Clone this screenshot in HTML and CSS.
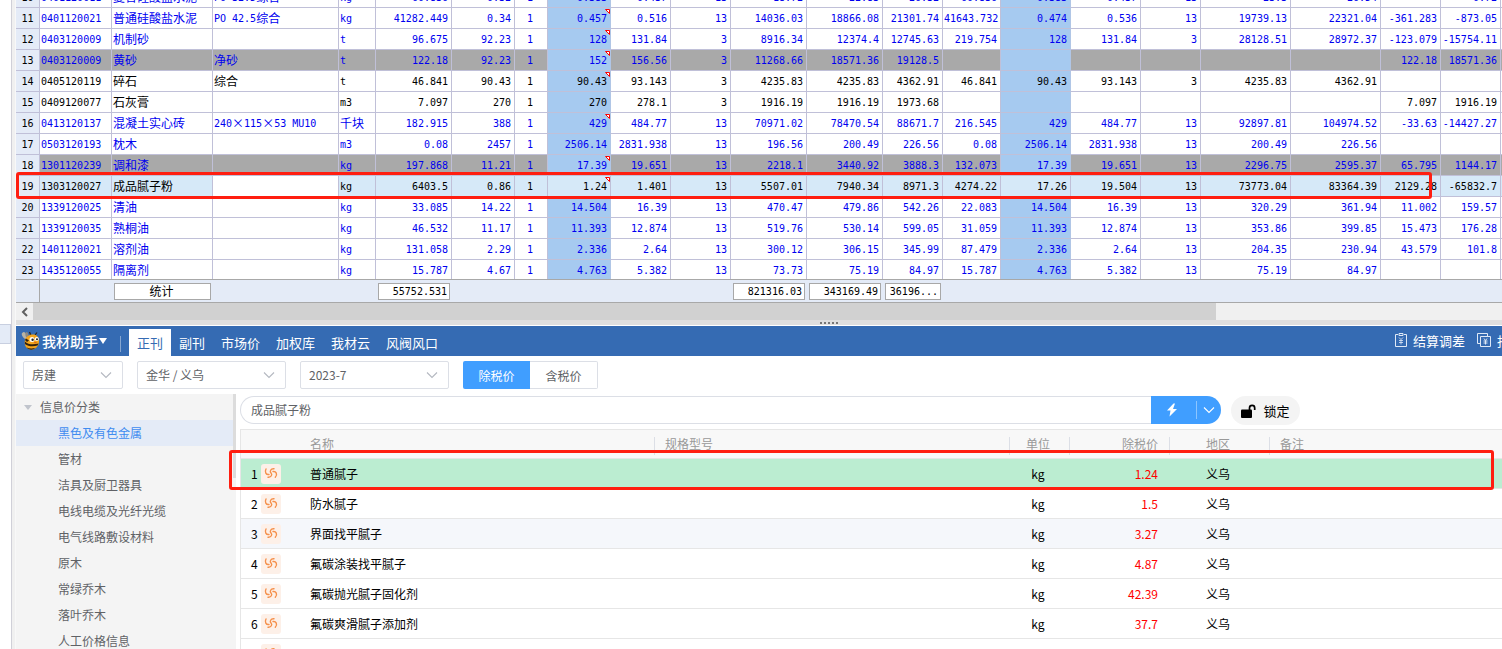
FILE: index.html
```
<!DOCTYPE html>
<html lang="zh-CN">
<head>
    <meta charset="UTF-8">
    <meta name="viewport" content="width=device-width, initial-scale=1.0">
    <title>我材助手</title>
    <link rel="stylesheet" href="styles.css">
</head>
<body>
    <!-- shared icons -->
    <svg class="icon-defs" aria-hidden="true">
        <symbol id="icon-down" viewBox="0 0 12 12">
            <path d="M1 3.5l5 5 5-5" fill="none" stroke="currentColor" stroke-width="1.1"/>
        </symbol>
        <symbol id="icon-link" viewBox="0 0 20 20">
            <path d="M5 5C3.500 8 5 11 8 10.500M13 4.800C9.500 4.500 8.500 7.500 10 9C11.500 10.500 10.500 13.500 7 13.200M12 7.500C15 7 17 10.500 14.300 13.300" fill="none" stroke="#f5914d" stroke-width="1.400" stroke-linecap="round"/>
        </symbol>
    </svg>

    <div class="app">
        <div class="left-strip">
            <div class="strip-top"></div>
            <div class="strip-tab"></div>
        </div>

        <div class="workspace">
            <!-- Settlement grid -->
            <section class="grid-pane">
                <div class="grid-view">
                    <table class="grid" id="grid">
                        <colgroup id="gridCols"></colgroup>
                        <tbody id="gridBody"></tbody>
                    </table>
                    <div class="mark mark-grid"></div>
                </div>
                <div class="grid-total">
                    <table class="grid total">
                        <colgroup id="totalCols"></colgroup>
                        <tbody><tr id="totalRow"></tr></tbody>
                    </table>
                </div>
                <div class="hscroll">
                    <button class="hscroll-btn" aria-label="向左滚动">
                        <svg width="8" height="10" viewBox="0 0 8 10"><path d="M6 1L2 5l4 4" fill="none" stroke="#606060" stroke-width="2"/></svg>
                    </button>
                    <div class="hscroll-thumb"></div>
                </div>
                <div class="splitter"><i></i><i></i><i></i><i></i><i></i></div>
            </section>

            <!-- Price helper -->
            <section class="helper">
                <header class="toolbar">
                    <button class="brand">
                        <svg width="20" height="20" viewBox="0 0 20 20">
                            <ellipse cx="3.500" cy="4.500" rx="2.200" ry="3.600" transform="rotate(-30 3.500 4.500)" fill="#b9b3a4"/>
                            <ellipse cx="6" cy="4" rx="1.600" ry="3" transform="rotate(-10 6 4)" fill="#8f8a80"/>
                            <path d="M10 4.500L8.500 1M14 4L16 1.500" stroke="#2d2418" stroke-width="1.200" fill="none"/>
                            <path d="M4 9C3 13 4.500 18 9 18.500C14 19 18 15.500 18 10.500C18 6 15.500 3.500 12 3.500C8.500 3.500 5 5.500 4 9z" fill="#f4a51c"/>
                            <path d="M3.900 10.500C7 13.500 12 14 17.500 12.500L16.600 14.600C12 16 7 15.500 3.900 13z" fill="#33230f"/>
                            <path d="M5.600 16.600C8.500 17.800 11.500 18 14.500 16.800C12 19.300 8 19.300 5.600 16.600z" fill="#33230f"/>
                            <path d="M5 7.500L8 9.500L6 11L4 9z" fill="#33230f"/>
                            <circle cx="11" cy="8.500" r="2.500" fill="#fff"/>
                            <circle cx="15.800" cy="8" r="2" fill="#fff"/>
                            <circle cx="11.600" cy="8.700" r="1.200" fill="#222"/>
                            <circle cx="16" cy="8.200" r="1" fill="#222"/>
                            <path d="M12.500 11.500C13.500 12.500 15 12.500 16 11.300z" fill="#c8471c"/>
                        </svg>
                        <span>我材助手</span>
                        <svg width="8" height="6" viewBox="0 0 8 6"><path d="M0 0h8L4 6z" fill="#fff"/></svg>
                    </button>
                    <nav class="tabs">
                        <a href="#" class="active">正刊</a>
                        <a href="#">副刊</a>
                        <a href="#">市场价</a>
                        <a href="#">加权库</a>
                        <a href="#">我材云</a>
                        <a href="#">风阀风口</a>
                    </nav>
                    <div class="tools">
                        <a href="#">
                            <svg width="12" height="14" viewBox="0 0 12 14" fill="none" stroke="#dfe9f6">
                                <path d="M3 1.500H.5v12h11v-12H9M4 .5h4v2H4z"/>
                                <path d="M4 4.500l2 2 2-2M4 7.500h4M4 9.500h4M6 6.500v5" stroke-width=".8"/>
                            </svg>结算调差
                        </a>
                        <a href="#">
                            <svg width="14" height="14" viewBox="0 0 14 14" fill="none" stroke="#dfe9f6">
                                <path d="M10.500 3V.5H.5v10H3"/>
                                <path d="M3.500 3.500h10v10h-10zM7 5.500l1.500 2L10 5.500M6.500 8h4M6.500 10h4M8.500 7.500v4"/>
                            </svg>报表
                        </a>
                    </div>
                </header>

                <div class="filters">
                    <div class="select select-small">
                        <select aria-label="专业"><option>房建</option></select>
                        <svg><use href="#icon-down"/></svg>
                    </div>
                    <div class="select">
                        <select aria-label="地区"><option>金华 / 义乌</option></select>
                        <svg><use href="#icon-down"/></svg>
                    </div>
                    <div class="select">
                        <select aria-label="期刊"><option>2023-7</option></select>
                        <svg><use href="#icon-down"/></svg>
                    </div>
                    <div class="tax-group">
                        <button class="on">除税价</button>
                        <button>含税价</button>
                    </div>
                </div>

                <div class="content">
                    <aside class="sidebar">
                        <ul class="tree">
                            <li class="tree-root">信息价分类</li>
                            <li class="current">黑色及有色金属</li>
                            <li>管材</li>
                            <li>洁具及厨卫器具</li>
                            <li>电线电缆及光纤光缆</li>
                            <li>电气线路敷设材料</li>
                            <li>原木</li>
                            <li>常绿乔木</li>
                            <li>落叶乔木</li>
                            <li>人工价格信息</li>
                        </ul>
                        <div class="sidebar-scroll"></div>
                    </aside>

                    <div class="results">
                        <div class="search">
                            <input type="text" value="成品腻子粉" aria-label="搜索材料">
                            <button class="search-btn" aria-label="搜索">
                                <svg width="12" height="14" viewBox="0 0 12 14"><path d="M7.500.5L1 7.500h3.500L3.500 13.500L11 6H7L9 .5z" fill="#fff"/></svg>
                            </button>
                            <button class="search-more" aria-label="更多">
                                <svg width="12" height="12"><use href="#icon-down"/></svg>
                            </button>
                            <button class="lock">
                                <svg width="16" height="14" viewBox="0 0 16 14">
                                    <rect x="0" y="5.500" width="11" height="8.500" rx="1"/>
                                    <path d="M8.500 6.500V4a2.600 2.600 0 0 1 5.200 0v2" fill="none" stroke="#000" stroke-width="1.700"/>
                                </svg>锁定
                            </button>
                        </div>

                        <table class="prices">
                            <colgroup>
                                <col class="p-no"><col class="p-name"><col class="p-spec"><col class="p-unit"><col class="p-price"><col class="p-area"><col>
                            </colgroup>
                            <thead>
                                <tr>
                                    <th></th>
                                    <th>名称</th>
                                    <th>规格型号</th>
                                    <th class="center">单位</th>
                                    <th class="right">除税价</th>
                                    <th class="center">地区</th>
                                    <th>备注</th>
                                </tr>
                            </thead>
                            <tbody id="priceBody"></tbody>
                        </table>
                    </div>
                </div>
                <div class="mark mark-price"></div>
            </section>
        </div>
    </div>

    <script>
        // column widths of the settlement grid, row header first
        const widths = [24, 72, 101, 126, 37, 76, 63, 33, 63, 60, 60, 76, 76, 60, 58, 70, 70, 60, 90, 90, 60, 60, 60];

        // state | no | code | name | spec | unit | figures...   (* = price note in the corner)
        const rows = [
            'blue|10|0401120011|复合硅酸盐水泥|PO 32.5综合|kg|60.836|0.32|1|0.383|0.437|13|18.72|22.83|26.32|60.836|0.383|0.437|13|23.3|26.54||0.72',
            'blue|11|0401120021|普通硅酸盐水泥|PO 42.5综合|kg|41282.449|0.34|1|0.457*|0.516|13|14036.03|18866.08|21301.74|41643.732|0.474|0.536|13|19739.13|22321.04|-361.283|-873.05',
            'blue|12|0403120009|机制砂||t|96.675|92.23|1|128*|131.84|3|8916.34|12374.4|12745.63|219.754|128|131.84|3|28128.51|28972.37|-123.079|-15754.11',
            'blue gray|13|0403120009|黄砂|净砂|t|122.18|92.23|1|152*|156.56|3|11268.66|18571.36|19128.5|||||||122.18|18571.36',
            'black|14|0405120119|碎石|综合|t|46.841|90.43|1|90.43*|93.143|3|4235.83|4235.83|4362.91|46.841|90.43|93.143|3|4235.83|4362.91||',
            'black|15|0409120077|石灰膏||m3|7.097|270|1|270|278.1|3|1916.19|1916.19|1973.68|||||||7.097|1916.19',
            'blue|16|0413120137|混凝土实心砖|240×115×53 MU10|千块|182.915|388|1|429*|484.77|13|70971.02|78470.54|88671.7|216.545|429|484.77|13|92897.81|104974.52|-33.63|-14427.27',
            'blue|17|0503120193|枕木||m3|0.08|2457|1|2506.14|2831.938|13|196.56|200.49|226.56|0.08|2506.14|2831.938|13|200.49|226.56||',
            'blue gray|18|1301120239|调和漆||kg|197.868|11.21|1|17.39*|19.651|13|2218.1|3440.92|3888.3|132.073|17.39|19.651|13|2296.75|2595.37|65.795|1144.17',
            'selected|19|1303120027|成品腻子粉||kg|6403.5|0.86|1|1.24*|1.401|13|5507.01|7940.34|8971.3|4274.22|17.26|19.504|13|73773.04|83364.39|2129.28|-65832.7',
            'blue|20|1339120025|清油||kg|33.085|14.22|1|14.504|16.39|13|470.47|479.86|542.26|22.083|14.504|16.39|13|320.29|361.94|11.002|159.57',
            'blue|21|1339120035|熟桐油||kg|46.532|11.17|1|11.393|12.874|13|519.76|530.14|599.05|31.059|11.393|12.874|13|353.86|399.85|15.473|176.28',
            'blue|22|1401120021|溶剂油||kg|131.058|2.29|1|2.336|2.64|13|300.12|306.15|345.99|87.479|2.336|2.64|13|204.35|230.94|43.579|101.8',
            'blue|23|1435120055|隔离剂||kg|15.787|4.67|1|4.763|5.382|13|73.73|75.19|84.97|15.787|4.763|5.382|13|75.19|84.97||'
        ];

        const prices = [
            ['普通腻子', '1.24'],
            ['防水腻子', '1.5'],
            ['界面找平腻子', '3.27'],
            ['氟碳涂装找平腻子', '4.87'],
            ['氟碳抛光腻子固化剂', '42.39'],
            ['氟碳爽滑腻子添加剂', '37.7'],
            ['', '']
        ];

        const cols = widths.map(w => `<col style="width:${w}px">`).join('');
        document.getElementById('gridCols').innerHTML = cols;
        document.getElementById('totalCols').innerHTML = cols;

        // Chinese text is set larger than the figures beside it
        const han = text => text.replace(/[\u4e00-\u9fa5×]+/g, '<b>$&</b>');

        function cellClass(i) {
            if (i === 0) return 'no';
            if (i === 7) return 'one';
            if (i === 8 || i === 15) return 'num tint';
            return i > 4 ? 'num' : 'txt';
        }

        document.getElementById('gridBody').innerHTML = rows.map(line => {
            const parts = line.split('|');
            const state = parts.shift();
            const cells = widths.map((w, i) => {
                let text = parts[i] || '';
                const note = text.endsWith('*');
                if (note) text = text.slice(0, -1);
                return `<td class="${cellClass(i)}">${han(text)}${note ? '<svg class="note" viewBox="0 0 5 5"><path d="M.5.5h4v4z"/></svg>' : ''}</td>`;
            }).join('');
            return `<tr class="${state}">${cells}</tr>`;
        }).join('');

        const totals = { 2: '统计', 5: '55752.531', 11: '821316.03', 12: '343169.49', 13: '36196...' };
        document.getElementById('totalRow').innerHTML = widths.map((w, i) =>
            `<td>${totals[i] ? `<output class="${i === 2 ? 'label' : ''}">${han(totals[i])}</output>` : ''}</td>`
        ).join('');

        document.getElementById('priceBody').innerHTML = prices.map((p, i) => `
            <tr>
                <td><span class="p-index"><span>${p[0] ? i + 1 : ''}</span><svg><use href="#icon-link"/></svg></span></td>
                <td>${p[0]}</td>
                <td></td>
                <td class="center">${p[0] ? 'kg' : ''}</td>
                <td class="right red">${p[1]}</td>
                <td class="center">${p[0] ? '义乌' : ''}</td>
                <td></td>
            </tr>`).join('');
    </script>
</body>
</html>
```
FILE: styles.css
```
* {
    box-sizing: border-box;
}

body {
    margin: 0;
    height: 100vh;
    overflow: hidden;
    background: #fff;
    color: #000;
    font-family: "Noto Sans CJK SC", sans-serif;
    font-size: 12px;
}

button, select, input {
    font: inherit;
    color: inherit;
    margin: 0;
}

button {
    border: 0;
    padding: 0;
    background: none;
    cursor: pointer;
}

a {
    color: inherit;
    text-decoration: none;
}

.icon-defs {
    position: absolute;
    width: 0;
    height: 0;
}

.app {
    display: flex;
    height: 100%;
    overflow: hidden;
}

/* Edge of the panel on the left */
.left-strip {
    flex: none;
    width: 16px;
    display: flex;
    flex-direction: column;
    border-right: 1px solid #f8f8f8;
    background: linear-gradient(90deg, #fff 11px, #d0d0d8 11px, #d0d0d8 12px, #f0f0f0 12px);
}

.strip-top {
    height: 324px;
}

.strip-tab {
    width: 11px;
    height: 20px;
    background: #e4ebf7;
    border: 1px solid #c8cfe0;
    border-left: 0;
}

.workspace {
    flex: 1;
    min-width: 0;
    display: flex;
    flex-direction: column;
}

/* Settlement grid */
.grid-pane {
    flex: none;
}

.grid-view {
    position: relative;
    height: 279px;
    overflow: hidden;
}

.grid {
    width: 1505px;
    table-layout: fixed;
    border-collapse: separate;
    border-spacing: 0;
    font-family: "DejaVu Sans Mono", "Noto Sans CJK SC", monospace;
    font-size: 10px;
    line-height: 18px;
}

/* scrolled down so that row 10 is only partly in view */
.grid-view .grid {
    margin-top: -13px;
}

.grid td {
    height: 21px;
    padding: 2px 3px 0 1px;
    white-space: nowrap;
    overflow: hidden;
}

.grid-view td {
    position: relative;
    border-right: 1px solid #c0c0d8;
    border-bottom: 1px solid #c0c0d8;
}

.grid b {
    font-family: "Noto Sans CJK SC", sans-serif;
    font-weight: 400;
    font-size: 12px;
    line-height: 1;
    vertical-align: -1px;
}

.grid .num {
    text-align: right;
}

.grid .one {
    text-align: center;
}

.grid .no {
    padding: 2px 0 0;
    color: #000;
    background: #e4ebf7;
    text-align: center;
}

.blue {
    color: #0000f0;
}

.gray {
    background: #a9a9a9;
}

.selected {
    background: #d6e9f8;
}

.selected td:nth-child(4) {
    background: #fff;
}

.grid .tint {
    background: #a6caf0;
    border-right-color: #b0c6e6;
}

.grid .selected .tint {
    background: #d6e9f8;
    border-right-color: #c0c0d8;
}

.note {
    position: absolute;
    top: 1px;
    right: 0;
    width: 5px;
    height: 5px;
    fill: #fff;
    stroke: #f00;
}

.grid-total {
    height: 24px;
    overflow: hidden;
    background: #e4ebf7;
    border-top: 1px solid #a8a8a8;
    border-bottom: 1px solid #a8a8a8;
}

.total td {
    height: 22px;
    padding: 0 2px;
}

.total td:first-child {
    border-right: 1px solid #a8a8a8;
}

.total output {
    display: block;
    height: 17px;
    padding-right: 2px;
    border: 1px solid #a8a8a8;
    background: #fff;
    line-height: 15px;
    text-align: right;
}

.total .label {
    text-align: center;
}

.hscroll {
    display: flex;
    height: 17px;
    background: #f0f0f0;
}

.hscroll-btn {
    width: 17px;
    display: flex;
    align-items: center;
    justify-content: center;
}

.hscroll-thumb {
    flex: none;
    width: 79.6%;
    background: #d1d1d1;
}

.splitter {
    height: 6px;
    display: flex;
    align-items: center;
    justify-content: center;
    gap: 2px;
    padding-left: 140px;
    background: #dfdfdf;
    border-bottom: 1px solid #fff;
}

.splitter i {
    width: 2px;
    height: 2px;
    background: #777;
}

/* Red frames */
.mark {
    position: absolute;
    border: 3px solid #ff1e10;
    border-radius: 3px;
    pointer-events: none;
}

.mark-grid {
    top: 172px;
    left: 0;
    right: 70px;
    height: 27px;
}

.mark-price {
    top: 124px;
    left: 213px;
    right: 8px;
    height: 40px;
}

/* Price helper */
.helper {
    position: relative;
    flex: 1;
    min-height: 0;
    display: flex;
    flex-direction: column;
    overflow: hidden;
}

.toolbar {
    flex: none;
    height: 30px;
    display: flex;
    align-items: flex-end;
    overflow: hidden;
    background: #356bb3;
    color: #fff;
    font-size: 13px;
}

.brand {
    height: 30px;
    display: flex;
    align-items: center;
    gap: 1px;
    padding: 0 14px 0 5px;
    font-weight: 500;
    font-size: 14px;
    position: relative;
}

.brand::after {
    content: "";
    position: absolute;
    right: 0;
    top: 10px;
    height: 16px;
    border-right: 1px solid #86a6d1;
}

.tabs {
    display: flex;
    margin-left: 8px;
}

.tabs a {
    height: 27px;
    padding: 0 8px;
    line-height: 27px;
}

.tabs .active {
    background: #fff;
    color: #356bb3;
}

.tools {
    flex: none;
    width: 107px;
    height: 28px;
    margin: 0 0 2px auto;
    display: flex;
    gap: 12px;
    overflow: hidden;
}

.tools a {
    flex: none;
    display: flex;
    align-items: center;
    gap: 6px;
}

.filters {
    flex: none;
    display: flex;
    gap: 14px;
    padding: 5px 7px;
    color: #606266;
}

.select {
    position: relative;
    width: 149px;
    height: 28px;
}

.select-small {
    width: 100px;
}

.select select {
    width: 100%;
    height: 28px;
    padding: 0 8px 2px;
    border: 1px solid #dcdfe6;
    border-radius: 2px;
    background: #fff;
    appearance: none;
}

.select svg {
    position: absolute;
    right: 11px;
    top: 8px;
    width: 12px;
    height: 12px;
    color: #b4b8c0;
    pointer-events: none;
}

.tax-group {
    display: flex;
}

.tax-group button {
    width: 68px;
    height: 28px;
    border: 1px solid #dcdfe6;
    border-left: 0;
    border-radius: 0 2px 2px 0;
}

.tax-group .on {
    width: 67px;
    border: 0;
    border-radius: 2px 0 0 2px;
    background: #409eff;
    color: #fff;
}

.content {
    flex: 1;
    min-height: 0;
    display: flex;
    gap: 4px;
}

.sidebar {
    flex: none;
    width: 220px;
    display: flex;
    overflow: hidden;
    background: #f4f4f4;
}

.tree {
    flex: 1;
    margin: 0;
    padding: 0;
    list-style: none;
    color: #606266;
}

.tree li {
    height: 26px;
    padding-left: 42px;
    line-height: 26px;
}

.tree .tree-root {
    display: flex;
    align-items: center;
    gap: 8px;
    padding-left: 8px;
}

.tree-root::before {
    content: "";
    border: 4px solid transparent;
    border-top: 5px solid #c0c4cc;
    border-bottom: 0;
}

.tree .current {
    background: #e4ebf7;
    color: #3f8cf0;
}

.sidebar-scroll {
    width: 3px;
    height: 84px;
    background: #dcdcdc;
}

.results {
    flex: 1;
    min-width: 0;
}

.search {
    display: flex;
    height: 35px;
    padding: 2px 202px 5px 0;
}

.search input {
    flex: 1;
    min-width: 0;
    height: 28px;
    padding: 0 10px 2px;
    border: 1px solid #dcdfe6;
    border-right: 0;
    border-radius: 14px 0 0 14px;
    color: #606266;
    background: #fff;
}

.search-btn, .search-more {
    flex: none;
    height: 28px;
    display: flex;
    align-items: center;
    justify-content: center;
    background: #409eff;
    color: #fff;
}

.search-btn {
    width: 45px;
    padding-right: 3px;
}

.search-more {
    width: 25px;
    border-radius: 0 14px 14px 0;
    position: relative;
}

.search-more::before {
    content: "";
    position: absolute;
    left: 0;
    top: 5px;
    height: 18px;
    border-left: 1px solid #8cc5ff;
}

.lock {
    flex: none;
    width: 69px;
    height: 29px;
    margin-left: 10px;
    display: flex;
    align-items: center;
    justify-content: center;
    gap: 6px;
    border-radius: 15px;
    background: #f4f4f4;
    font-size: 13px;
}

.prices {
    width: 100%;
    table-layout: fixed;
    border-collapse: separate;
    border-spacing: 0;
    border-left: 1px solid #e6e6e6;
}

.p-no {
    width: 59px;
}

.p-name, .p-spec {
    width: 355px;
}

.p-unit {
    width: 60px;
}

.p-price, .p-area {
    width: 100px;
}

.prices th {
    height: 30px;
    padding: 0 10px 1px;
    border-top: 1px solid #e6e6e6;
    border-bottom: 1px solid #e6e6e6;
    background: linear-gradient(#dcdfe6, #dcdfe6) right 7px / 1px 18px no-repeat #f8f8f8;
    color: #999;
    font-weight: 400;
    text-align: left;
}

.prices th:first-child, .prices th:last-child {
    background: #f8f8f8;
}

.prices td {
    height: 30px;
    padding: 0 10px;
    border-bottom: 1px solid #e6e6e6;
}

.prices tbody tr:first-child {
    background: #bbedd1;
}

.prices tbody tr:nth-child(3) {
    background: #f5f7fb;
}

.prices .center {
    padding-right: 14px;
    text-align: center;
}

.prices .right {
    padding-right: 12px;
    text-align: right;
}

.prices .red {
    color: #f00;
}

.p-index {
    display: flex;
    align-items: center;
}

.p-index span {
    width: 10px;
}

.p-index svg {
    flex: none;
    width: 20px;
    height: 20px;
    border-radius: 3px;
    background: #fdf0e8;
}
```
